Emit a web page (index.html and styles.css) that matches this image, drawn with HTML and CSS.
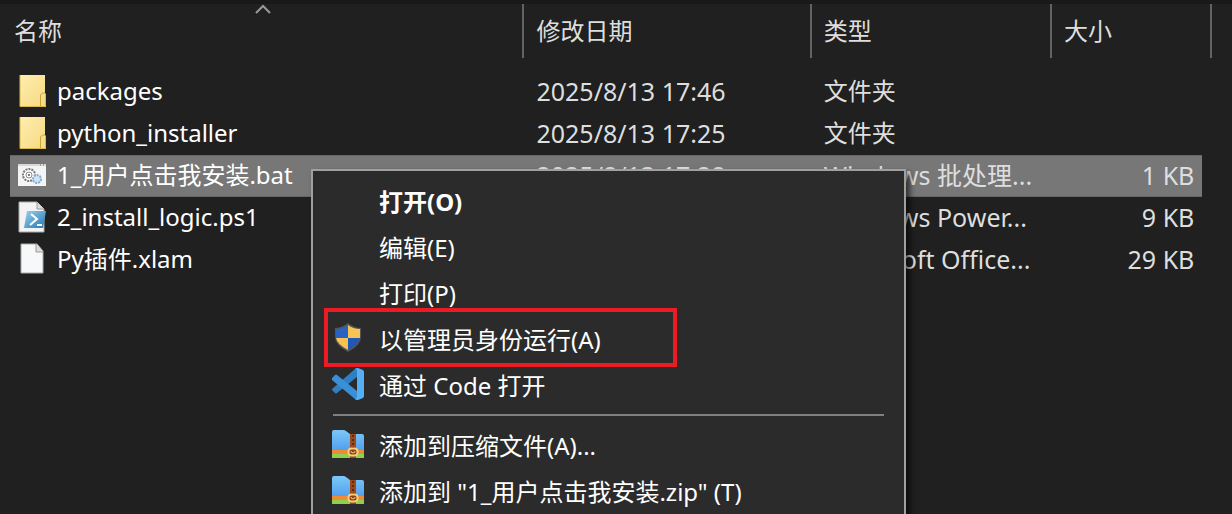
FILE: index.html
```html
<!DOCTYPE html>
<html lang="zh-CN">

<head>
    <meta charset="UTF-8">
    <meta name="viewport" content="width=device-width, initial-scale=1.0">
    <title>文件列表</title>

    <link rel="stylesheet" href="styles.css">
</head>

<body>
    <!-- 公用图标 -->
    <svg class="symbols" width="0" height="0">
        <defs>
            <linearGradient id="folderFill" x1="0" y1="0" x2="1" y2="1">
                <stop offset="0" stop-color="#ffeeb0" />
                <stop offset="1" stop-color="#f6d980" />
            </linearGradient>
            <linearGradient id="zipFill" x1="0" y1="0" x2="0" y2="1">
                <stop offset="0" stop-color="#7cc8fa" />
                <stop offset="1" stop-color="#4e9ceb" />
            </linearGradient>
            <linearGradient id="psFill" x1="0" y1="0" x2="1" y2="1">
                <stop offset="0" stop-color="#9cd0ec" />
                <stop offset="1" stop-color="#1f78b4" />
            </linearGradient>
        </defs>
        <symbol id="folder" viewBox="0 0 28 34">
            <path d="M2 1h25v18l1 1v13H2z" fill="url(#folderFill)" />
            <path d="M2 1v31.500h25.500V20" fill="none" stroke="#d9b94c" />
            <path d="M22.500 32V21l2-2h2.500" fill="none" stroke="#c9a63c" />
        </symbol>
        <symbol id="zip" viewBox="0 0 34 30">
            <path d="M1 3q0-2 2-2h9q2 0 3 1l4 3h12q2 0 2 2v16H1z" fill="url(#zipFill)" />
            <path d="M1 21h32v4H1z" fill="#ed8b36" />
            <path d="M1 25h32v4H1z" fill="#8fd14a" />
            <path d="M19 5h6v24h-6z" fill="#9c4a1c" />
            <path d="M22 6v13" stroke="#5e2a10" stroke-width="2" stroke-dasharray="2 2" />
            <rect x="17.500" y="19.500" width="9" height="7" rx="3" fill="#8a3f18" stroke="#f7cd78" stroke-width="2" />
            <path d="M20 22v1q2 2 4 0v-1" fill="none" stroke="#f7cd78" />
        </symbol>
    </svg>

    <div class="explorer">
        <!-- 文件列表 -->
        <table class="files">
            <colgroup>
                <col class="col-name">
                <col class="col-date">
                <col class="col-type">
                <col class="col-size">
                <col>
            </colgroup>
            <thead>
                <tr>
                    <th class="name">名称
                        <svg class="sort" viewBox="0 0 18 11"><path d="M2 9l7-7 7 7" fill="none" stroke="#999" stroke-width="2" /></svg>
                    </th>
                    <th>修改日期</th>
                    <th>类型</th>
                    <th class="head-size">大小</th>
                    <th></th>
                </tr>
            </thead>
            <tbody>
                <tr>
                    <td class="name">
                        <div class="file"><svg class="file-icon"><use href="#folder" /></svg>packages</div>
                    </td>
                    <td class="latin">2025/8/13 17:46</td>
                    <td>文件夹</td>
                    <td class="size"></td>
                    <td></td>
                </tr>
                <tr>
                    <td class="name">
                        <div class="file"><svg class="file-icon"><use href="#folder" /></svg>python_installer</div>
                    </td>
                    <td class="latin">2025/8/13 17:25</td>
                    <td>文件夹</td>
                    <td class="size"></td>
                    <td></td>
                </tr>
                <tr class="selected">
                    <td class="name">
                        <div class="file">
                            <svg class="file-icon" viewBox="0 0 28 34">
                                <path d="M0 6h28v22H0z" fill="#f4f4f4" />
                                <path d="M0 6h28v2H0z" fill="#d8d8d8" />
                                <path d="M22 7h1m2 0h1" stroke="#666" />
                                <circle cx="11" cy="17" r="6" fill="#fff" stroke="#777" stroke-width="2" stroke-dasharray="2 1" />
                                <circle cx="11" cy="17" r="3" fill="none" stroke="#888" />
                                <circle cx="11" cy="17" r="1" fill="#555" />
                                <circle cx="19" cy="21" r="4" fill="#cfe3f5" stroke="#84acd2" stroke-width="2" stroke-dasharray="2 1" />
                            </svg>1_用户点击我安装.bat</div>
                    </td>
                    <td class="latin">2025/8/13 17:28</td>
                    <td class="latin">Windows 批处理...</td>
                    <td class="size">1 KB</td>
                    <td></td>
                </tr>
                <tr>
                    <td class="name">
                        <div class="file">
                            <svg class="file-icon" viewBox="0 0 28 34">
                                <path d="M1 2h18l7 7v23H1z" fill="#f3f3f3" stroke="#aaa" />
                                <path d="M19 2v7h7" fill="#ddd" stroke="#999" />
                                <path d="M9 11h19l-3 17H6z" fill="url(#psFill)" />
                                <path d="M13 14l6 5-7 6m7 0h5" fill="none" stroke="#fff" stroke-width="2" />
                            </svg>2_install_logic.ps1</div>
                    </td>
                    <td class="latin">2025/8/13 17:20</td>
                    <td class="latin">Windows Power...</td>
                    <td class="size">9 KB</td>
                    <td></td>
                </tr>
                <tr>
                    <td class="name">
                        <div class="file">
                            <svg class="file-icon" viewBox="0 0 28 34">
                                <path d="M3 2h16l6 7v22H3z" fill="#f6f8f9" stroke="#aaa" />
                                <path d="M18 2v8h7" fill="#ddd" stroke="#999" />
                            </svg>Py插件.xlam</div>
                    </td>
                    <td class="latin">2025/8/13 17:10</td>
                    <td class="latin">Microsoft Office...</td>
                    <td class="size">29 KB</td>
                    <td></td>
                </tr>
            </tbody>
        </table>

        <!-- 右键菜单 -->
        <div class="menu">
            <button type="button" class="menu-item default"><span class="menu-icon"></span>打开(O)</button>
            <button type="button" class="menu-item"><span class="menu-icon"></span>编辑(E)</button>
            <button type="button" class="menu-item"><span class="menu-icon"></span>打印(P)</button>
            <button type="button" class="menu-item marked">
                <svg class="menu-icon" viewBox="0 0 34 34">
                    <path d="M17 2q6 5 13 5v9q0 8-13 15Q4 24 4 16V7q7 0 13-5z" fill="#555" />
                    <path d="M17 4v13H5V8q7 0 12-4z" fill="#2a62c4" />
                    <path d="M17 4q5 4 12 4v9H17z" fill="#f7c353" />
                    <path d="M5 17h12v12Q6 23 5 17z" fill="#f7c353" />
                    <path d="M17 17h12q-1 6-12 12z" fill="#2158b8" />
                </svg>以管理员身份运行(A)</button>
            <button type="button" class="menu-item">
                <svg class="menu-icon" viewBox="0 0 34 34">
                    <path d="M1 23l3 3q1 1 2 0L26 10V1q-1 0-2 1L1 22z" fill="#2f7fc4" />
                    <path d="M1 11l3-3q1-1 2 0l20 16v9q-1 0-2-1L1 13z" fill="#3a8fd6" />
                    <path d="M24 2q1-1 3-1l5 2q1 1 1 2v24q0 1-1 2l-5 2q-2 0-3-1 2 0 2-2V4q0-2-2-2z" fill="#55aff2" />
                </svg>通过 Code 打开</button>
            <hr class="menu-line">
            <button type="button" class="menu-item"><svg class="menu-icon zip"><use href="#zip" /></svg>添加到压缩文件(A)...</button>
            <button type="button" class="menu-item"><svg class="menu-icon zip"><use href="#zip" /></svg>添加到 "1_用户点击我安装.zip" (T)</button>
        </div>
    </div>
</body>

</html>
```
FILE: styles.css
```css
* {
    margin: 0;
    padding: 0;
    box-sizing: border-box;
}

body {
    background: #202020;
    color: #f0f0f0;
    font-family: "Noto Sans", "Noto Sans CJK SC", sans-serif;
    font-size: 24px;
}

.symbols {
    position: absolute;
}

.explorer {
    position: relative;
    height: 100vh;
    overflow: hidden;
    padding: 0 20px 0 10px;
    border-top: 4px solid #191919;
}

/* 文件列表 */
.files {
    width: 100%;
    table-layout: fixed;
    border-collapse: separate;
    border-spacing: 0;
}

.col-name {
    width: 42.8%;
}

.col-date {
    width: 23.9%;
}

.col-type {
    width: 20%;
}

.col-size {
    width: 12.5%;
}

.files th {
    height: 54px;
    padding-left: 12px;
    border-right: 2px solid #636363;
    color: #dedede;
    font-weight: normal;
    line-height: 36px;
    text-align: left;
    white-space: nowrap;
}

/* 大小列的分隔线画在最后一列右边 */
.files .head-size {
    border-right: 0;
}

.files th.name {
    position: relative;
    padding-left: 4px;
}

/* 排序箭头 */
.sort {
    position: absolute;
    top: 0;
    left: 50%;
    width: 18px;
    height: 11px;
    margin-left: -12px;
}

.files tbody::before {
    content: "";
    display: table-row;
    height: 13px;
}

.files td {
    height: 42px;
    padding-left: 12px;
    padding-bottom: 2px;
    color: #dedede;
    line-height: 36px;
    white-space: nowrap;
}

.files td.name {
    padding-left: 8px;
    color: #fff;
}

.file {
    display: flex;
    align-items: center;
    gap: 11px;
}

.file-icon {
    width: 28px;
    height: 34px;
}

.files .latin {
    font-size: 25px;
}

.files .size {
    padding-right: 8px;
    font-size: 25px;
    text-align: right;
}

.selected td:not(:last-child) {
    background: #777;
    border-top: 1px solid #666;
    border-bottom: 1px solid #666;
}

/* 右键菜单 */
.menu {
    position: absolute;
    top: 165px;
    left: 311px;
    width: 595px;
    padding: 6px 0;
    background: #2b2b2b;
    border: 2px solid #a0a0a0;
    box-shadow: 4px 4px 6px rgba(0, 0, 0, .6);
}

.menu-item {
    position: relative;
    display: flex;
    align-items: center;
    gap: 14px;
    width: 100%;
    height: 46px;
    padding-left: 18px;
    background: none;
    border: 0;
    color: #fff;
    font: inherit;
    text-align: left;
    white-space: nowrap;
}

.default {
    font-weight: bold;
}

.menu-icon {
    width: 34px;
    height: 34px;
}

.zip {
    height: 30px;
}

/* 红框标记 */
.marked::after {
    content: "";
    position: absolute;
    top: -7px;
    left: 11px;
    width: 353px;
    height: 59px;
    border: 4px solid #ed1c24;
    box-sizing: border-box;
}

.menu-line {
    height: 2px;
    margin: 7px 20px 5px;
    border: 0;
    background: #808080;
}
```
